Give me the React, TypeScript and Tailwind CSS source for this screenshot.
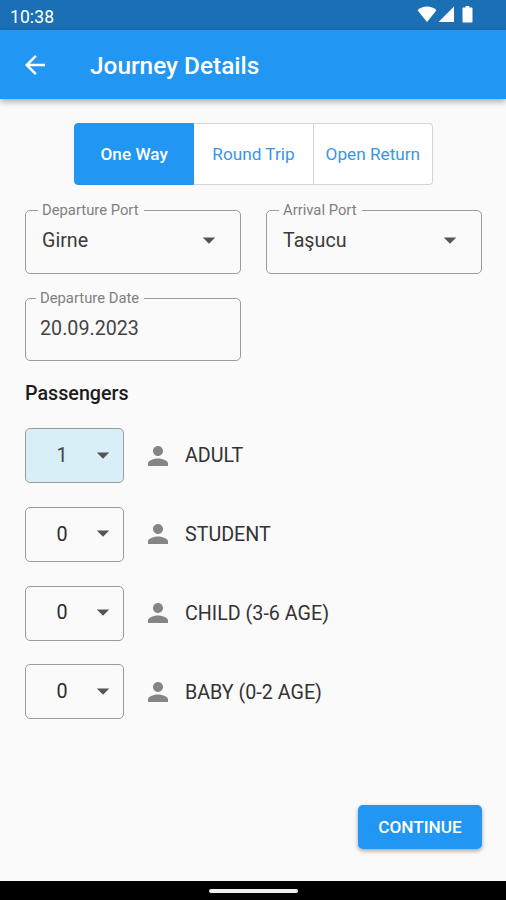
import React, { useState } from 'react';
import { MdArrowBack, MdArrowDropDown, MdPerson } from 'react-icons/md';

type PassengerType = { key: string; label: string; count: number };

const TRIP_TYPES = ['One Way', 'Round Trip', 'Open Return'];

const INITIAL_PASSENGERS: PassengerType[] = [
  { key: 'adult', label: 'ADULT', count: 1 },
  { key: 'student', label: 'STUDENT', count: 0 },
  { key: 'child', label: 'CHILD (3-6 AGE)', count: 0 },
  { key: 'baby', label: 'BABY (0-2 AGE)', count: 0 },
];

const StatusBar: React.FC = () => (
  <div className="flex h-[30px] shrink-0 items-center justify-between bg-[#1b6fb5] pr-8 pl-[10px] text-white">
    <span className="pt-[3px] text-[17.5px] leading-5 tracking-[0.1px]">10:38</span>
    <svg width="57" height="18" viewBox="0 0 57 18" fill="currentColor" className="-mt-0.5">
      <path d="M0.5 5.2C5.6 0.4 14.4 0.4 19.5 5.2L10 17Z" />
      <path d="M37 1.5V17H21.5Z" />
      <path d="M46.6 2.5H48.6V1H52.4V2.5H54.4C55.2 2.5 55.5 3 55.5 3.6V16.4C55.5 17.1 55.1 17.5 54.4 17.5H46.6C45.9 17.5 45.5 17.1 45.5 16.4V3.6C45.5 3 45.8 2.5 46.6 2.5Z" />
    </svg>
  </div>
);

const OutlinedField: React.FC<{ label: string; className: string; children: React.ReactNode }> = ({ label, className, children }) => (
  <fieldset className={`w-[216px] min-w-0 rounded-[5px] border border-[#9b9b9b] ${className}`}>
    <legend className="pr-[5px] pl-1 text-[14.8px] leading-4 text-[#808080]">{label}</legend>
    {children}
  </fieldset>
);

const PortSelect: React.FC<{ label: string; value: string }> = ({ label, value }) => (
  <OutlinedField label={label} className="h-[72px] pl-3">
    <button className="flex h-[45px] w-full items-center justify-between pr-4 pl-1 text-[19.7px] text-[#3a3a3a]">
      <span className="pt-px">{value}</span>
      <MdArrowDropDown className="mb-px size-[30px] text-[#555]" />
    </button>
  </OutlinedField>
);

const PassengerRow: React.FC<{ passenger: PassengerType; onChange: () => void }> = ({ passenger, onChange }) => (
  <div className="flex h-[55px] items-center">
    <button
      onClick={onChange}
      className={`flex h-[55px] w-[99px] items-center justify-end rounded-[5px] border border-[#9b9b9b] pr-[5px] text-[19.7px] ${passenger.count > 0 ? 'bg-[#d9eff7] text-[#444]' : 'text-[#2b2b2b]'}`}
    >
      <span className="w-3 text-center">{passenger.count}</span>
      <MdArrowDropDown className="mb-0.5 ml-5 size-[30px] text-[#555]" />
    </button>
    <MdPerson className="ml-[19px] size-[30px] text-[#858585]" />
    <span className="ml-3 pt-px text-[19.7px] text-[#333]">{passenger.label}</span>
  </div>
);

const JourneyDetails: React.FC = () => {
  const [tripType, setTripType] = useState('One Way');
  const [passengers, setPassengers] = useState(INITIAL_PASSENGERS);

  const addPassenger = (key: string) => {
    setPassengers(passengers.map(p => (p.key === key ? { ...p, count: (p.count + 1) % 10 } : p)));
  };

  return (
    <div className="flex h-[900px] w-[506px] flex-col bg-[#fafafa] font-[Roboto,sans-serif]">
      <StatusBar />
      <header className="flex h-[69px] shrink-0 items-center bg-[#2196f3] pl-5 text-white shadow-[0_3px_6px_rgba(0,0,0,0.3)]">
        <MdArrowBack className="size-[30px]" />
        <h1 className="ml-10 pt-[3px] text-[24.4px] font-medium">Journey Details</h1>
      </header>

      <main className="flex flex-1 flex-col pr-6 pl-[25px]">
        <div className="mt-6 flex h-[62px] w-[359px] self-center">
          {TRIP_TYPES.map(type => (
            <button
              key={type}
              onClick={() => setTripType(type)}
              className={`flex-1 border border-l-0 pt-px text-[17.2px] first:rounded-l-[4px] first:border-l last:rounded-r-[4px] ${tripType === type ? 'border-[#2196f3] bg-[#2196f3] font-medium text-white' : 'border-[#d5d5d5] bg-white text-[#3a94ea]'}`}
            >
              {type}
            </button>
          ))}
        </div>

        <div className="mt-[17px] flex gap-[25px]">
          <PortSelect label="Departure Port" value="Girne" />
          <PortSelect label="Arrival Port" value="Taşucu" />
        </div>
        <OutlinedField label="Departure Date" className="mt-4 h-[71px] pl-[10px]">
          <div className="flex h-[46px] items-center pl-1 text-[19.7px] text-[#444]">20.09.2023</div>
        </OutlinedField>

        <h2 className="mt-5 text-[19.7px] leading-[26px] font-medium text-[#1c1c1c]">Passengers</h2>
        <div className="mt-[21px] flex flex-col gap-[23.8px]">
          {passengers.map(p => (
            <PassengerRow key={p.key} passenger={p} onChange={() => addPassenger(p.key)} />
          ))}
        </div>

        <button className="mt-auto mb-8 h-11 w-[124px] self-end rounded-[5px] bg-[#2196f3] pt-px text-[17.2px] font-medium text-white shadow-[0_2px_4px_rgba(0,0,0,0.35)]">
          CONTINUE
        </button>
      </main>

      <div className="flex h-[19px] shrink-0 items-center justify-center bg-black">
        <div className="mt-px h-1 w-[89px] rounded-sm bg-[#eee]" />
      </div>
    </div>
  );
};

export default JourneyDetails;
